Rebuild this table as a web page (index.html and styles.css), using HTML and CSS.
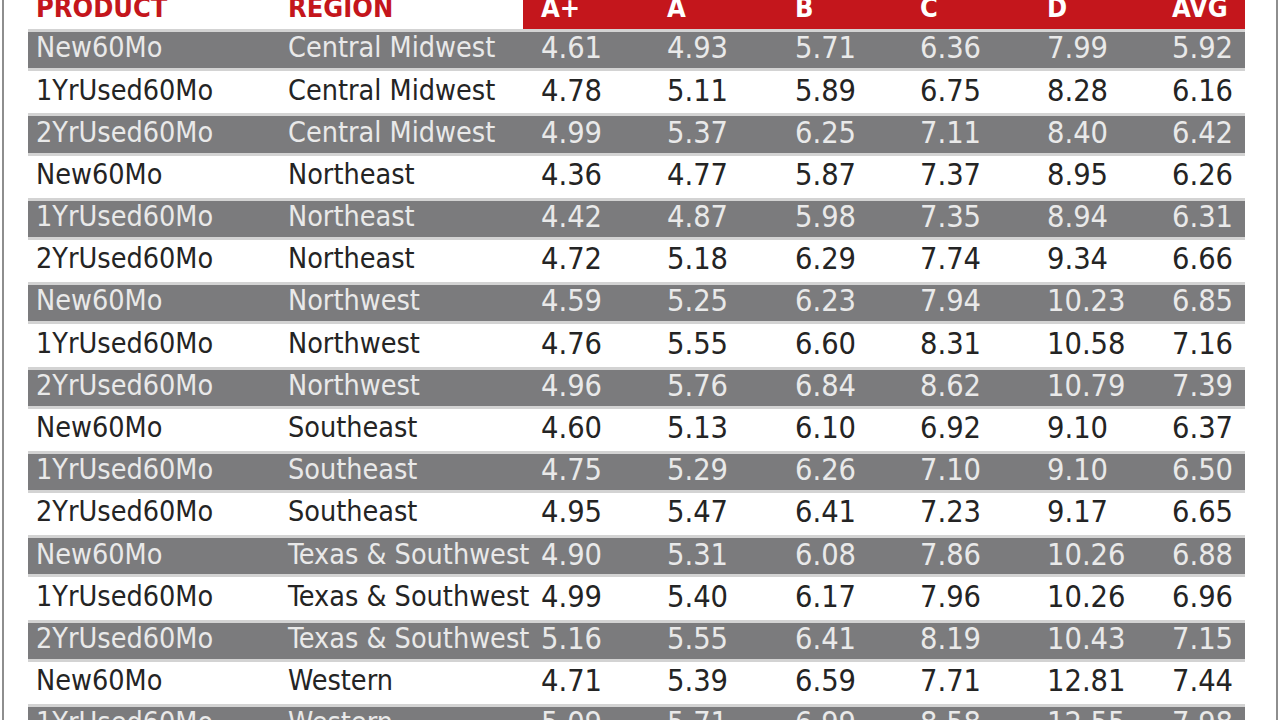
FILE: index.html
```html
<!DOCTYPE html>
<html>
<head>
<meta charset="utf-8">
<link rel="stylesheet" href="styles.css">
</head>
<body>
<div class="frame">
  <div class="table">
    <div class="row head">
      <div class="c c1 hl">PRODUCT</div>
      <div class="c c2 hl">REGION</div>
      <div class="c c3 hr">A+</div>
      <div class="c c4 hr">A</div>
      <div class="c c5 hr">B</div>
      <div class="c c6 hr">C</div>
      <div class="c c7 hr">D</div>
      <div class="c c8 hr">AVG</div>
    </div>
    <div class="row alt"><div class="c c1">New60Mo</div><div class="c c2">Central Midwest</div><div class="c c3">4.61</div><div class="c c4">4.93</div><div class="c c5">5.71</div><div class="c c6">6.36</div><div class="c c7">7.99</div><div class="c c8">5.92</div></div>
    <div class="row"><div class="c c1">1YrUsed60Mo</div><div class="c c2">Central Midwest</div><div class="c c3">4.78</div><div class="c c4">5.11</div><div class="c c5">5.89</div><div class="c c6">6.75</div><div class="c c7">8.28</div><div class="c c8">6.16</div></div>
    <div class="row alt"><div class="c c1">2YrUsed60Mo</div><div class="c c2">Central Midwest</div><div class="c c3">4.99</div><div class="c c4">5.37</div><div class="c c5">6.25</div><div class="c c6">7.11</div><div class="c c7">8.40</div><div class="c c8">6.42</div></div>
    <div class="row"><div class="c c1">New60Mo</div><div class="c c2">Northeast</div><div class="c c3">4.36</div><div class="c c4">4.77</div><div class="c c5">5.87</div><div class="c c6">7.37</div><div class="c c7">8.95</div><div class="c c8">6.26</div></div>
    <div class="row alt"><div class="c c1">1YrUsed60Mo</div><div class="c c2">Northeast</div><div class="c c3">4.42</div><div class="c c4">4.87</div><div class="c c5">5.98</div><div class="c c6">7.35</div><div class="c c7">8.94</div><div class="c c8">6.31</div></div>
    <div class="row"><div class="c c1">2YrUsed60Mo</div><div class="c c2">Northeast</div><div class="c c3">4.72</div><div class="c c4">5.18</div><div class="c c5">6.29</div><div class="c c6">7.74</div><div class="c c7">9.34</div><div class="c c8">6.66</div></div>
    <div class="row alt"><div class="c c1">New60Mo</div><div class="c c2">Northwest</div><div class="c c3">4.59</div><div class="c c4">5.25</div><div class="c c5">6.23</div><div class="c c6">7.94</div><div class="c c7">10.23</div><div class="c c8">6.85</div></div>
    <div class="row"><div class="c c1">1YrUsed60Mo</div><div class="c c2">Northwest</div><div class="c c3">4.76</div><div class="c c4">5.55</div><div class="c c5">6.60</div><div class="c c6">8.31</div><div class="c c7">10.58</div><div class="c c8">7.16</div></div>
    <div class="row alt"><div class="c c1">2YrUsed60Mo</div><div class="c c2">Northwest</div><div class="c c3">4.96</div><div class="c c4">5.76</div><div class="c c5">6.84</div><div class="c c6">8.62</div><div class="c c7">10.79</div><div class="c c8">7.39</div></div>
    <div class="row"><div class="c c1">New60Mo</div><div class="c c2">Southeast</div><div class="c c3">4.60</div><div class="c c4">5.13</div><div class="c c5">6.10</div><div class="c c6">6.92</div><div class="c c7">9.10</div><div class="c c8">6.37</div></div>
    <div class="row alt"><div class="c c1">1YrUsed60Mo</div><div class="c c2">Southeast</div><div class="c c3">4.75</div><div class="c c4">5.29</div><div class="c c5">6.26</div><div class="c c6">7.10</div><div class="c c7">9.10</div><div class="c c8">6.50</div></div>
    <div class="row"><div class="c c1">2YrUsed60Mo</div><div class="c c2">Southeast</div><div class="c c3">4.95</div><div class="c c4">5.47</div><div class="c c5">6.41</div><div class="c c6">7.23</div><div class="c c7">9.17</div><div class="c c8">6.65</div></div>
    <div class="row alt"><div class="c c1">New60Mo</div><div class="c c2">Texas &amp; Southwest</div><div class="c c3">4.90</div><div class="c c4">5.31</div><div class="c c5">6.08</div><div class="c c6">7.86</div><div class="c c7">10.26</div><div class="c c8">6.88</div></div>
    <div class="row"><div class="c c1">1YrUsed60Mo</div><div class="c c2">Texas &amp; Southwest</div><div class="c c3">4.99</div><div class="c c4">5.40</div><div class="c c5">6.17</div><div class="c c6">7.96</div><div class="c c7">10.26</div><div class="c c8">6.96</div></div>
    <div class="row alt"><div class="c c1">2YrUsed60Mo</div><div class="c c2">Texas &amp; Southwest</div><div class="c c3">5.16</div><div class="c c4">5.55</div><div class="c c5">6.41</div><div class="c c6">8.19</div><div class="c c7">10.43</div><div class="c c8">7.15</div></div>
    <div class="row"><div class="c c1">New60Mo</div><div class="c c2">Western</div><div class="c c3">4.71</div><div class="c c4">5.39</div><div class="c c5">6.59</div><div class="c c6">7.71</div><div class="c c7">12.81</div><div class="c c8">7.44</div></div>
    <div class="row alt"><div class="c c1">1YrUsed60Mo</div><div class="c c2">Western</div><div class="c c3">5.09</div><div class="c c4">5.71</div><div class="c c5">6.99</div><div class="c c6">8.58</div><div class="c c7">12.55</div><div class="c c8">7.98</div></div>
  </div>
</div>
</body>
</html>
```

FILE: styles.css
```css
html, body {
  margin: 0;
  padding: 0;
  background: #ffffff;
}
.frame {
  box-sizing: border-box;
  width: 1276px;
  height: 720px;
  margin-left: 2px;
  border-left: 2px solid #8e8e8e;
  border-right: 2px solid #8e8e8e;
  padding-left: 24px;
  overflow: hidden;
  background: #ffffff;
}
.table {
  width: 1217px;
  font-family: "DejaVu Sans Condensed", "Liberation Sans", Arial, sans-serif;
  font-size: 30.5px;
  color: #242424;
}
.row {
  display: grid;
  grid-template-columns: 252px 243px 136px 128px 125px 127px 125px 81px;
  box-sizing: border-box;
  height: 42.2px;
  align-items: center;
}
.row.alt {
  background: #7b7b7d;
  color: #e9e9e9;
  border-top: 3px solid #d3d3d3;
  border-bottom: 3px solid #d3d3d3;
}
.row.head {
  height: 29px;
  align-items: start;
  overflow: hidden;
  background: linear-gradient(to right, #ffffff 0 495px, #c4161c 495px);
}
.c {
  padding-left: 8px;
  white-space: nowrap;
  line-height: 1;
  padding-bottom: 3px;
}
.c1, .c2 {
  font-size: 28.5px;
}
.c3 {
  padding-left: 18px;
}
.head .c {
  font-weight: bold;
  font-size: 27px;
  padding-bottom: 0;
  margin-top: -6px;
}
.hl {
  color: #c4161c;
}
.hr {
  color: #ffffff;
}
```
